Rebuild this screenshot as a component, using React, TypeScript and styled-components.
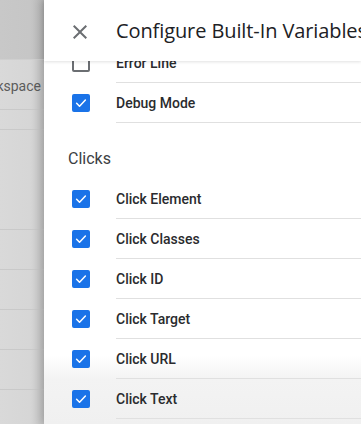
import styled, { createGlobalStyle } from 'styled-components';

const GlobalStyle = createGlobalStyle`
  html, body {
    margin: 0;
    padding: 0;
    background: #d6d6d6;
  }
  * {
    box-sizing: border-box;
  }
`;

const builtIns = [
  { label: 'Error Line', checked: false },
  { label: 'Debug Mode', checked: true },
];

const clicks = ['Click Element', 'Click Classes', 'Click ID', 'Click Target', 'Click URL', 'Click Text'];

function CheckIcon() {
  return (
    <svg width="14" height="14" viewBox="0 0 24 24">
      <path d="M4.5 12.5l5 5L19.5 7" fill="none" stroke="#ffffff" strokeWidth="2.6" strokeLinecap="round" strokeLinejoin="round" />
    </svg>
  );
}

function CloseIcon() {
  return (
    <svg width="24" height="24" viewBox="0 0 24 24">
      <path d="M19 6.41L17.59 5 12 10.59 6.41 5 5 6.41 10.59 12 5 17.59 6.41 19 12 13.41 17.59 19 19 17.59 13.41 12z" fill="#6b6e72" />
    </svg>
  );
}

function VariableRow({ label, checked }: { label: string; checked: boolean }) {
  return (
    <Row>
      <BoxCell>
        <Box $checked={checked}>{checked && <CheckIcon />}</Box>
      </BoxCell>
      <Label>{label}</Label>
    </Row>
  );
}

export default function App() {
  return (
    <>
      <GlobalStyle />
      <Page>
        <Backdrop>
          <TopBand />
          <BackItem $h={50}>kspace</BackItem>
          <BackItem $h={20} />
          <BackItem $h={100} />
          <BackItem $h={40} />
          <BackItem $h={40} />
          <BackItem $h={40} />
          <BackItem $h={40} />
          <BackItem $h={40} />
        </Backdrop>
        <Panel>
          <Header>
            <CloseButton>
              <CloseIcon />
            </CloseButton>
            <Title>Configure Built-In Variables</Title>
          </Header>
          <Body>
            <List>
              {builtIns.map((v) => (
                <VariableRow key={v.label} label={v.label} checked={v.checked} />
              ))}
              <SectionTitle>Clicks</SectionTitle>
              {clicks.map((c) => (
                <VariableRow key={c} label={c} checked />
              ))}
            </List>
          </Body>
        </Panel>
      </Page>
    </>
  );
}

const Page = styled.div`
  display: flex;
  width: 361px;
  height: 424px;
  overflow: hidden;
  font-family: Roboto, 'Liberation Sans', sans-serif;
`;

const Backdrop = styled.div`
  width: 44px;
  flex-shrink: 0;
  display: flex;
  flex-direction: column;
  background: linear-gradient(to right, #d9d9d9 0, #d6d6d6 30px, #c4c4c4 44px);
  overflow: hidden;
`;

const TopBand = styled.div`
  height: 60px;
  flex-shrink: 0;
  background: linear-gradient(to right, #c8c8c8 0, #c6c6c6 30px, #b8b8b8 44px);
  border-bottom: 1px solid #cfcfcf;
`;

const BackItem = styled.div<{ $h: number }>`
  height: ${({ $h }) => $h}px;
  flex-shrink: 0;
  border-bottom: 1px solid #c9c9c9;
  display: flex;
  align-items: center;
  justify-content: flex-end;
  padding-right: 3px;
  padding-top: 3px;
  font-size: 14px;
  color: #5c5c5c;
  white-space: nowrap;
`;

const Panel = styled.div`
  flex: 1;
  min-width: 0;
  display: flex;
  flex-direction: column;
  background: #ffffff;
  box-shadow: -3px 0 8px rgba(0, 0, 0, 0.18);
  position: relative;
  z-index: 1;
`;

const Header = styled.div`
  height: 61px;
  flex-shrink: 0;
  display: flex;
  align-items: center;
  background: #ffffff;
  box-shadow: 0 1px 3px rgba(0, 0, 0, 0.12);
  position: relative;
  z-index: 2;
  white-space: nowrap;
`;

const CloseButton = styled.div`
  width: 72px;
  flex-shrink: 0;
  display: flex;
  align-items: center;
  padding-left: 24px;
  margin-top: 2px;
`;

const Title = styled.div`
  font-family: 'Open Sans', Roboto, sans-serif;
  font-size: 20px;
  color: #202124;
  letter-spacing: -0.1px;
`;

const Body = styled.div`
  flex: 1;
  overflow: hidden;
  background: linear-gradient(to bottom, #ffffff 0, #ffffff 294px, #f3f3f3 318px, #f0f0f0 100%);
`;

const List = styled.div`
  margin-top: -18px;
  display: flex;
  flex-direction: column;
`;

const Row = styled.div`
  display: flex;
  height: 40px;
`;

const BoxCell = styled.div`
  width: 72px;
  flex-shrink: 0;
  display: flex;
  align-items: center;
  padding-left: 28px;
`;

const Box = styled.div<{ $checked: boolean }>`
  width: 18px;
  height: 18px;
  border-radius: 2px;
  display: flex;
  align-items: center;
  justify-content: center;
  background: ${({ $checked }) => ($checked ? '#1a73e8' : '#ffffff')};
  border: 2px solid ${({ $checked }) => ($checked ? '#1a73e8' : '#6b6e72')};
`;

const Label = styled.div`
  flex: 1;
  display: flex;
  align-items: center;
  border-bottom: 1px solid #e0e0e0;
  font-size: 14px;
  font-weight: 500;
  color: #2a2b2e;
  white-space: nowrap;
`;

const SectionTitle = styled.div`
  padding: 26px 0 10px 24px;
  line-height: 20px;
  font-size: 16px;
  color: #3c4043;
`;
